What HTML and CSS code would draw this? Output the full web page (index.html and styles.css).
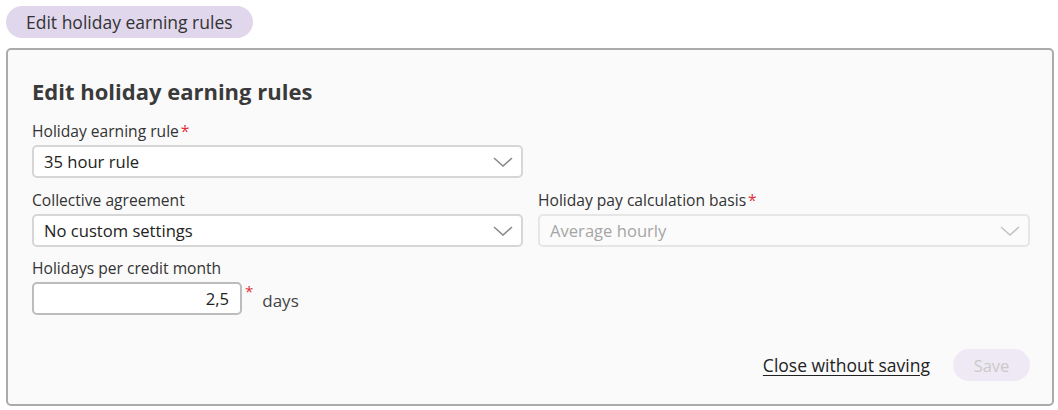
FILE: index.html
```html
<!DOCTYPE html>
<html lang="en">
<head>
<meta charset="utf-8">
<title>Edit holiday earning rules</title>
<link rel="stylesheet" href="styles.css">
</head>
<body>
<div class="chip">Edit holiday earning rules</div>
<section class="panel">
  <h1 class="title">Edit holiday earning rules</h1>
  <div class="field">
    <label class="label">Holiday earning rule<span class="req">*</span></label>
    <div class="grid first">
      <div class="select">
        <span class="value">35 hour rule</span>
        <svg class="chev" width="20" height="10" viewBox="0 0 20 10"><path d="M1 1 L10 9 L19 1" fill="none" stroke="#8a8a8a" stroke-width="1.6"/></svg>
      </div>
    </div>
  </div>
  <div class="grid">
    <div class="field">
      <label class="label">Collective agreement</label>
      <div class="select">
        <span class="value">No custom settings</span>
        <svg class="chev" width="20" height="10" viewBox="0 0 20 10"><path d="M1 1 L10 9 L19 1" fill="none" stroke="#8a8a8a" stroke-width="1.6"/></svg>
      </div>
    </div>
    <div class="field">
      <label class="label">Holiday pay calculation basis<span class="req">*</span></label>
      <div class="select disabled">
        <span class="value">Average hourly</span>
        <svg class="chev" width="20" height="10" viewBox="0 0 20 10"><path d="M1 1 L10 9 L19 1" fill="none" stroke="#c4c4c4" stroke-width="1.6"/></svg>
      </div>
    </div>
  </div>
  <div class="field">
    <label class="label">Holidays per credit month</label>
    <div class="unit-row">
      <div class="input">2,5</div>
      <span class="req req-side">*</span>
      <span class="unit">days</span>
    </div>
  </div>
  <div class="footer">
    <a class="link" href="#">Close without saving</a>
    <button class="save" disabled>Save</button>
  </div>
</section>
</body>
</html>
```
FILE: styles.css
```css
* { box-sizing: border-box; }
body {
  margin: 0;
  padding: 6px;
  background: #ffffff;
  font-family: "Open Sans", "Noto Sans", sans-serif;
  color: #333333;
}
.chip {
  display: inline-block;
  height: 32px;
  line-height: 32px;
  padding: 0 20px;
  border-radius: 16px;
  background: #e1d7ed;
  font-size: 17.5px;
  color: #333;
}
.panel {
  margin-top: 10px;
  width: 1048px;
  border: 2px solid #ababab;
  border-radius: 5px;
  background: #fafafa;
  padding: 27px 22px 23px 24px;
}
.title {
  margin: 0 0 16px;
  font-size: 22px;
  line-height: 28px;
  font-weight: 700;
  color: #3a3a3a;
}
.field { display: flex; flex-direction: column; }
.label {
  font-size: 15.6px;
  line-height: 20px;
  color: #333;
  margin-bottom: 4px;
}
.req { color: #e0303a; margin-left: 2px; }
.grid {
  display: grid;
  grid-template-columns: 491px 492px;
  column-gap: 15px;
  margin-bottom: 11px;
}
.grid.first { margin-bottom: 12px; }
.select {
  height: 33px;
  border: 2px solid #d6d6d6;
  border-radius: 5px;
  background: #fff;
  display: flex;
  align-items: center;
  justify-content: space-between;
  padding: 0 8px 0 10px;
}
.value { font-size: 16.6px; color: #222; }
.select.disabled { background: #fbfbfb; border-color: #e6e6e6; }
.select.disabled .value { color: #a5a5a5; }
.unit-row { display: flex; align-items: flex-start; }
.input {
  width: 210px;
  height: 33px;
  border: 2px solid #bcbcbc;
  border-radius: 5px;
  background: #fff;
  text-align: right;
  padding-right: 11px;
  font-size: 16.6px;
  line-height: 29px;
  color: #222;
}
.req-side { margin-left: 3px; font-size: 15px; line-height: 18px; }
.unit { margin-left: 9px; margin-top: 7px; font-size: 17px; color: #444; }
.footer {
  margin-top: 34px;
  display: flex;
  justify-content: flex-end;
  align-items: center;
  gap: 23px;
}
.link {
  color: #222;
  font-size: 17.5px;
  text-decoration: underline;
  text-underline-offset: 3px;
}
.save {
  width: 77px;
  height: 32px;
  border: none;
  border-radius: 16px;
  background: #eee9f4;
  color: #c9c9c9;
  font-family: inherit;
  font-size: 16.5px;
}
```
